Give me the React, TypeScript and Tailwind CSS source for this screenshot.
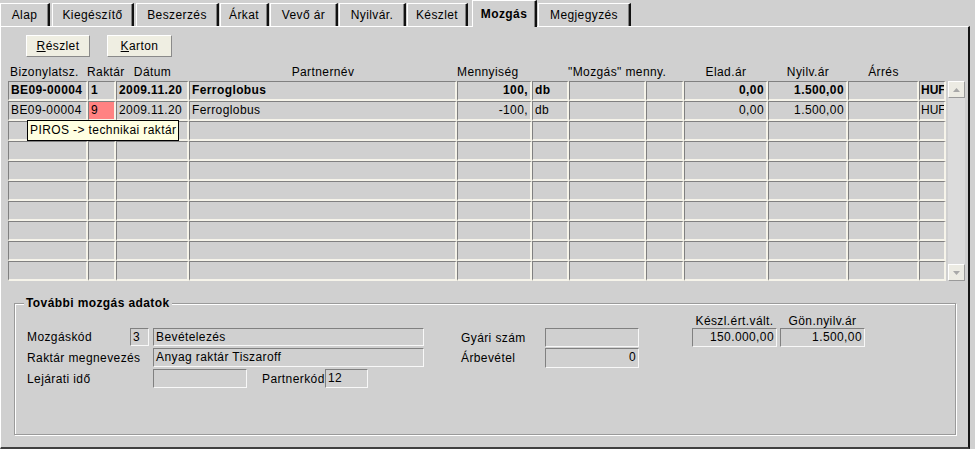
import React from "react";

const tabs = [
  { label: "Alap", cls: "ml-[0px] w-[50px]" },
  { label: "Kiegészítő", cls: "ml-[2px] w-[82px]" },
  { label: "Beszerzés", cls: "ml-[2px] w-[83px]" },
  { label: "Árkat", cls: "ml-[1px] w-[49px]" },
  { label: "Vevő ár", cls: "ml-[1px] w-[68px]" },
  { label: "Nyilvár.", cls: "ml-[1px] w-[67px]" },
  { label: "Készlet", cls: "ml-[1px] w-[61px]" },
  { label: "Mozgás", cls: "ml-[4px] w-[65px]", active: true },
  { label: "Megjegyzés", cls: "ml-[1px] w-[93px]" },
];

const cols =
  "grid grid-cols-[80px_28px_73px_268px_75px_37px_77px_38px_84px_80px_71px_27px]";

const cellBase =
  "h-[20px] border-t border-l border-r-2 border-b-2 border-t-[#808080] border-l-[#808080] border-r-[#f6f4ea] border-b-[#f6f4ea] leading-[17px] overflow-hidden whitespace-nowrap";

type Row = { bold?: boolean; cells: string[] };

const rows: Row[] = [
  {
    bold: true,
    cells: ["BE09-00004", "1", "2009.11.20", "Ferroglobus", "100,", "db", "", "", "0,00", "1.500,00", "", "HUF"],
  },
  {
    cells: ["BE09-00004", "9", "2009.11.20", "Ferroglobus", "-100,", "db", "", "", "0,00", "1.500,00", "", "HUF"],
  },
];

const rightCols = [4, 8, 9];

const Field = ({ w, h, children, right }: { w: string; h: string; children?: React.ReactNode; right?: boolean }) => (
  <div
    className={`${w} ${h} border-t border-l border-r border-b border-t-[#808080] border-l-[#808080] border-r-[#f8f8f8] border-b-[#f8f8f8] px-[2px] leading-[17px] whitespace-nowrap overflow-hidden ${
      right ? "text-right" : ""
    }`}
  >
    {children}
  </div>
);

const Arrow = ({ down }: { down?: boolean }) => (
  <div className="w-[17px] h-[17px] bg-[#ecebe3] border-t border-l border-r border-b border-t-white border-l-white border-r-[#9a9a9a] border-b-[#9a9a9a] flex items-center justify-center">
    <svg width="7" height="4" viewBox="0 0 7 4">
      {down ? <polygon points="0,0 7,0 3.5,4" fill="#a8a8a8" /> : <polygon points="0,4 7,4 3.5,0" fill="#a8a8a8" />}
    </svg>
  </div>
);

export default function App() {
  const allRows: Row[] = [...rows];
  while (allRows.length < 10) allRows.push({ cells: Array(12).fill("") });

  return (
    <div className="w-[975px] h-[449px] bg-[#d0d0d0] overflow-hidden font-['Liberation_Sans',Arial,sans-serif] text-[12px] tracking-[0.4px] text-black">
      {/* tabs */}
      <div className="flex items-end h-[26px]">
        {tabs.map((t) => (
          <div
            key={t.label}
            className={`${t.cls} ${
              t.active ? "h-[27px] font-bold -mb-[1px] z-10 bg-[#d0d0d0]" : "h-[23px]"
            } border-t border-l border-r-2 border-t-white border-l-white border-r-[#111] shadow-[inset_-1px_0_0_#808080] flex items-center justify-center leading-none`}
          >
            {t.label}
          </div>
        ))}
      </div>

      {/* panel */}
      <div className="w-[970px] h-[423px] border-t border-l border-r-2 border-b-2 border-t-white border-l-white border-r-[#151515] border-b-[#404040] flex flex-col">
        {/* buttons */}
        <div className="flex mt-[8px] ml-[25px] gap-[17px]">
          <button className="w-[64px] h-[22px] bg-[#efeee2] border-t border-l border-r border-b border-t-white border-l-white border-r-[#8a8a8a] border-b-[#8a8a8a]">
            <span className="underline">R</span>észlet
          </button>
          <button className="w-[65px] h-[22px] bg-[#efeee2] border-t border-l border-r border-b border-t-white border-l-white border-r-[#8a8a8a] border-b-[#8a8a8a]">
            <span className="underline">K</span>arton
          </button>
        </div>

        {/* header */}
        <div className={`${cols} ml-[7px] mt-[7px] h-[17px] leading-[17px] whitespace-nowrap`}>
          <div className="pl-[2px]">Bizonylatsz.</div>
          <div className="-ml-[1px]">Raktár</div>
          <div className="text-center">Dátum</div>
          <div className="text-center">Partnernév</div>
          <div>Mennyiség</div>
          <div />
          <div className="col-span-2 -ml-[1px]">"Mozgás" menny.</div>
          <div className="text-center">Elad.ár</div>
          <div className="text-center">Nyilv.ár</div>
          <div className="text-center">Árrés</div>
          <div />
        </div>

        {/* grid + scrollbar */}
        <div className="flex ml-[7px]">
          <div className="relative">
            {allRows.map((r, ri) => (
              <div key={ri} className={`${cols} ${r.bold ? "font-bold" : ""}`}>
                {r.cells.map((c, ci) => (
                  <div
                    key={ci}
                    className={`${cellBase} ${rightCols.includes(ci) ? "text-right" : ""} ${
                      ci === 11 ? "pl-[1px] tracking-normal" : "px-[2px]"
                    } ${ri === 1 && ci === 1 ? "bg-[#ff8282]" : ""}`}
                  >
                    {c}
                  </div>
                ))}
              </div>
            ))}
            <div className="absolute left-[19px] top-[39px] h-[21px] px-[2px] bg-[#ffffe1] border border-black leading-[19px] whitespace-nowrap">
              PIROS -&gt; technikai raktár
            </div>
          </div>
          <div className="ml-[2px] w-[17px] h-[200px] bg-[#dcdcdc] flex flex-col justify-between">
            <Arrow />
            <Arrow down />
          </div>
        </div>

        {/* group box */}
        <div className="relative ml-[13px] mt-[22px] w-[942px] h-[132px] border border-[#9a9a9a] shadow-[inset_1px_1px_0_#fff,1px_1px_0_#fff]">
          <div className="absolute -top-[8px] left-[9px] px-[2px] bg-[#d0d0d0] font-bold leading-[14px]">
            További mozgás adatok
          </div>
          <div className="flex items-start pt-[10px] pl-[12px]">
            {/* left block */}
            <div className="flex flex-col mt-[14px]">
              <div className="flex items-center">
                <div className="w-[103px]">Mozgáskód</div>
                <Field w="w-[19px]" h="h-[18px]">3</Field>
                <div className="ml-[4px]">
                  <Field w="w-[271px]" h="h-[18px]">Bevételezés</Field>
                </div>
              </div>
              <div className="flex items-center mt-[2px]">
                <div className="w-[126px]">Raktár megnevezés</div>
                <Field w="w-[271px]" h="h-[19px]">Anyag raktár Tiszaroff</Field>
              </div>
              <div className="flex items-center mt-[2px]">
                <div className="w-[126px]">Lejárati idő</div>
                <Field w="w-[94px]" h="h-[19px]" />
                <div className="ml-[15px] w-[63px] whitespace-nowrap">Partnerkód</div>
                <Field w="w-[43px]" h="h-[19px]">12</Field>
              </div>
            </div>

            {/* middle block */}
            <div className="flex flex-col mt-[14px] ml-[37px]">
              <div className="flex items-center">
                <div className="w-[84px]">Gyári szám</div>
                <Field w="w-[94px]" h="h-[19px]" />
              </div>
              <div className="flex items-center mt-[1px]">
                <div className="w-[84px]">Árbevétel</div>
                <Field w="w-[94px]" h="h-[20px]" right>
                  0
                </Field>
              </div>
            </div>

            {/* right block */}
            <div className="flex ml-[53px] gap-[3px]">
              <div className="flex flex-col">
                <div className="h-[14px] leading-[14px] text-center whitespace-nowrap">Készl.ért.vált.</div>
                <Field w="w-[85px]" h="h-[19px]" right>
                  150.000,00
                </Field>
              </div>
              <div className="flex flex-col">
                <div className="h-[14px] leading-[14px] text-center whitespace-nowrap">Gön.nyilv.ár</div>
                <Field w="w-[85px]" h="h-[19px]" right>
                  1.500,00
                </Field>
              </div>
            </div>
          </div>
        </div>
      </div>
    </div>
  );
}
